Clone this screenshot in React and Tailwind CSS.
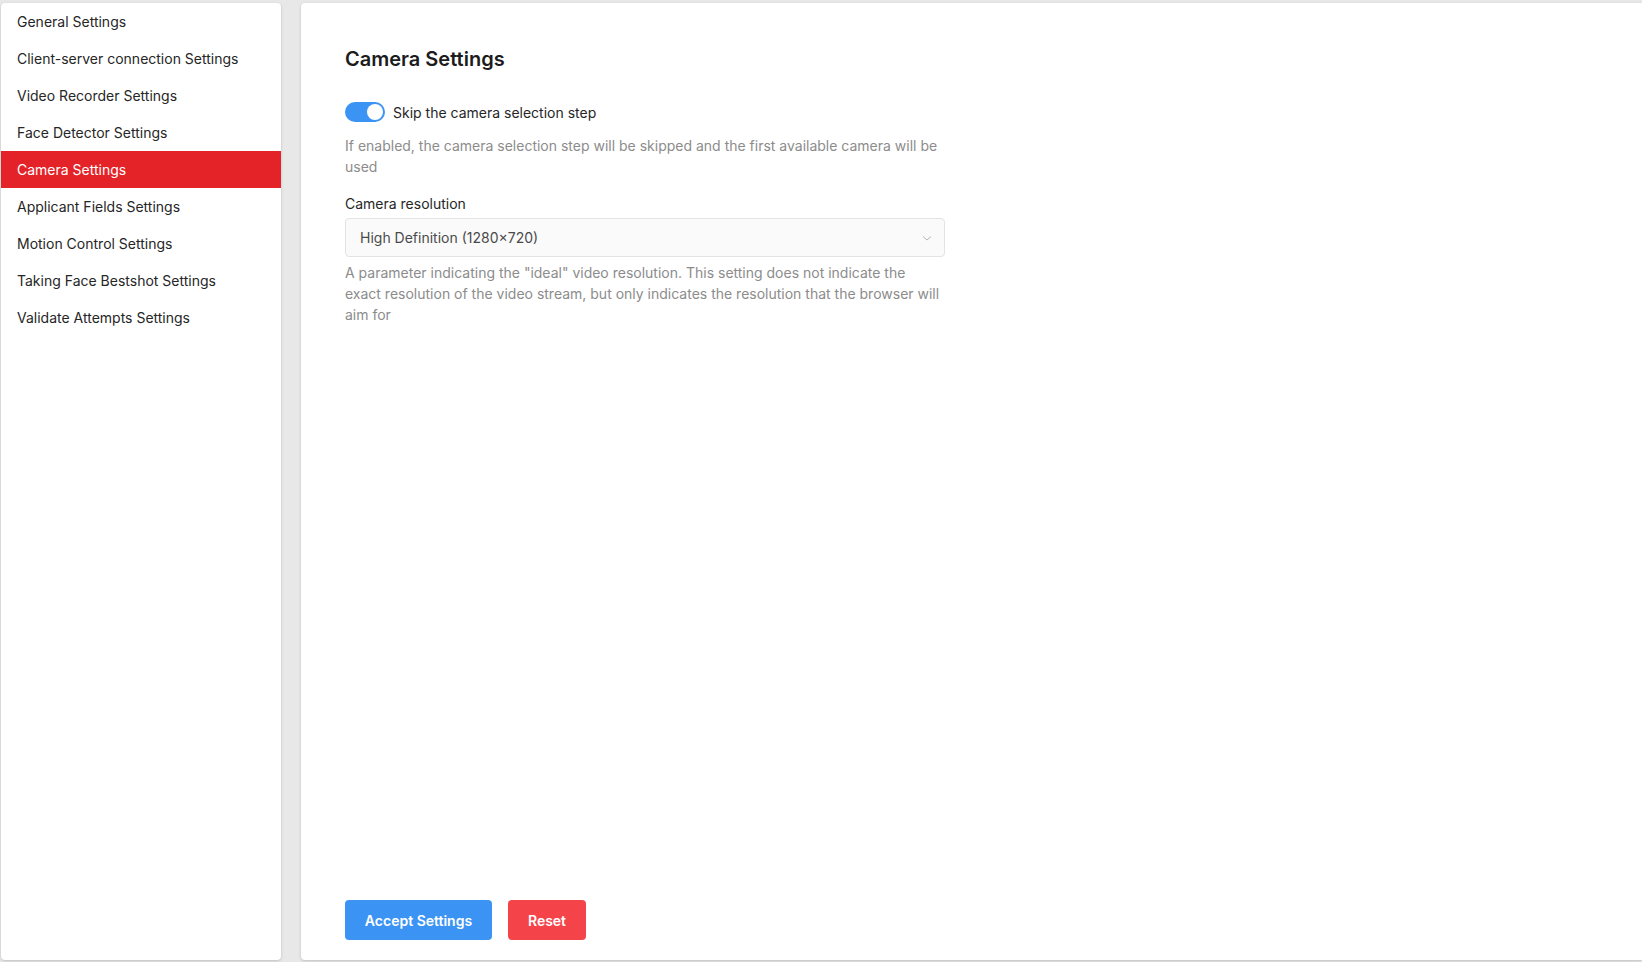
import { useState } from 'react'

const menu = [
    'General Settings',
    'Client-server connection Settings',
    'Video Recorder Settings',
    'Face Detector Settings',
    'Camera Settings',
    'Applicant Fields Settings',
    'Motion Control Settings',
    'Taking Face Bestshot Settings',
    'Validate Attempts Settings',
]

const App = () => {
    const [active, setActive] = useState('Camera Settings')
    const [skip, setSkip] = useState(true)

    return (
        <div
            className="h-[962px] w-full bg-[#e8e8e8] flex gap-[20px] pt-[3px] pb-[2px] pl-[1px] overflow-hidden"
            style={{ fontFamily: 'Inter, "Liberation Sans", sans-serif' }}
        >
            {/* サイドメニュー */}
            <div className="w-[280px] shrink-0 bg-white rounded shadow-[0_1px_3px_rgba(0,0,0,0.18)] overflow-hidden">
                {menu.map((item) => (
                    <div
                        key={item}
                        onClick={() => setActive(item)}
                        className={
                            item === active
                                ? 'h-[37px] flex items-center pl-[16px] text-[14px] text-white bg-[#e42328] cursor-pointer'
                                : 'h-[37px] flex items-center pl-[16px] text-[14px] text-[#262626] cursor-pointer'
                        }
                    >
                        {item}
                    </div>
                ))}
            </div>

            {/* メイン */}
            <div className="flex-1 bg-white rounded-l shadow-[0_1px_3px_rgba(0,0,0,0.18)] pt-[42px] px-[44px] pb-[20px] flex flex-col">
                <h1 className="text-[20px] leading-[28px] font-semibold text-[#1c1c1c]">Camera Settings</h1>

                <div className="w-[600px]">
                    <div className="mt-[28px] flex items-center gap-[8px] h-[22px]">
                        <button
                            onClick={() => setSkip(!skip)}
                            className={
                                skip
                                    ? 'w-[40px] h-[20px] rounded-full bg-[#3b94f4] flex items-center justify-end px-[2px]'
                                    : 'w-[40px] h-[20px] rounded-full bg-[#bfbfbf] flex items-center justify-start px-[2px]'
                            }
                        >
                            <span className="w-[16px] h-[16px] rounded-full bg-white block" />
                        </button>
                        <span className="text-[14px] text-[#262626]">Skip the camera selection step</span>
                    </div>
                    <p className="mt-[12px] text-[14px] leading-[21px] text-[#8c8c8c]">
                        If enabled, the camera selection step will be skipped and the first available camera will be used
                    </p>

                    <div className="mt-[16px] text-[14px] leading-[21px] text-[#262626]">Camera resolution</div>
                    <div className="mt-[4px] h-[39px] bg-[#fafafa] border border-[#e3e3e3] rounded flex items-center justify-between pl-[14px] pr-[11px]">
                        <span className="text-[14px] text-[#4a4a4a]">High Definition (1280×720)</span>
                        <svg width="12" height="12" viewBox="0 0 12 12" fill="none">
                            <path d="M2 4.5 L6 8 L10 4.5" stroke="#b5b5b5" strokeWidth="1" />
                        </svg>
                    </div>
                    <p className="mt-[5px] text-[14px] leading-[21px] text-[#8c8c8c]">
                        A parameter indicating the "ideal" video resolution. This setting does not indicate the exact resolution of the video stream, but only indicates the resolution that the browser will aim for
                    </p>
                </div>

                <div className="mt-auto flex gap-[16px]">
                    <button className="w-[147px] h-[40px] rounded bg-[#3b94f4] text-white text-[14px] font-semibold">
                        Accept Settings
                    </button>
                    <button className="w-[78px] h-[40px] rounded bg-[#f5434a] text-white text-[14px] font-semibold">
                        Reset
                    </button>
                </div>
            </div>
        </div>
    )
}

export default App
